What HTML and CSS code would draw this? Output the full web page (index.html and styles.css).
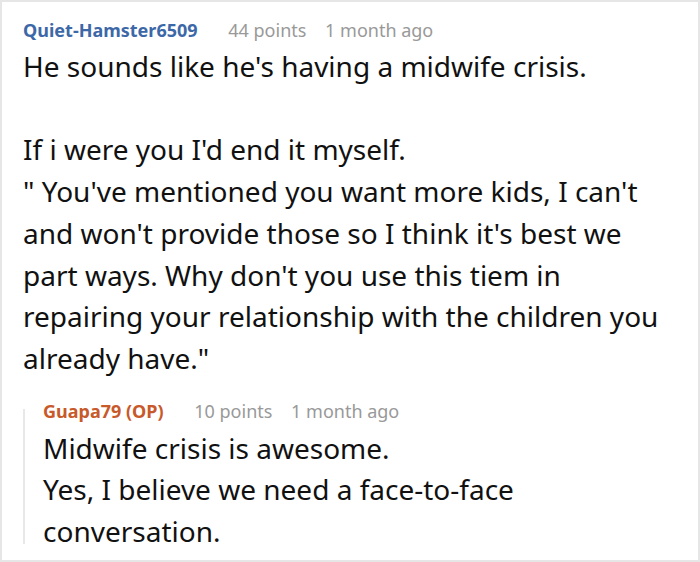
FILE: index.html
```html
<!DOCTYPE html>
<html lang="en">
<head>
    <meta charset="UTF-8">
    <title>Comment</title>
    <link rel="stylesheet" href="styles.css">
</head>
<body>
    <div class="comment-box">
        <div class="comment">
            <div class="comment-meta">
                <span class="author">Quiet-Hamster6509</span>
                <span class="points">44 points</span>
                <span class="time">1 month ago</span>
            </div>
            <div class="comment-text">
                He sounds like he's having a midwife crisis.<br><br>
                If i were you I'd end it myself.<br>
                " You've mentioned you want more kids, I can't and won't provide those so I think it's best we part ways. Why don't you use this tiem in repairing your relationship with the children you already have."
            </div>
        </div>

        <div class="reply">
            <div class="comment-meta">
                <span class="author op">Guapa79 (OP)</span>
                <span class="points">10 points</span>
                <span class="time">1 month ago</span>
            </div>
            <div class="comment-text">
                Midwife crisis is awesome.<br>
                Yes, I believe we need a face-to-face conversation.
            </div>
        </div>
    </div>
</body>
</html>
```

FILE: styles.css
```css
body {
    margin: 0;
    padding: 0;
    font-family: "Noto Sans", "Open Sans", sans-serif;
    background-color: #fff;
}

.comment-box {
    width: 700px;
    height: 562px;
    box-sizing: border-box;
    border: 2px solid #e6e6e6;
    padding: 16px 20px 0 21px;
    overflow: hidden;
}

.comment-meta {
    font-size: 18px;
    line-height: 24px;
    color: #999;
}

.comment-meta .author {
    font-weight: bold;
    color: #3d68a8;
    margin-right: 26px;
}

.comment-meta .points {
    margin-right: 14px;
}

.comment-meta .author.op {
    color: #c8592b;
}

.comment-text {
    font-size: 28px;
    line-height: 41.7px;
    color: #111;
    margin-top: 4px;
}

/* Reply thread */
.reply {
    position: relative;
    margin-top: 19px;
    padding-left: 20px;
}

.reply .comment-text {
    margin-top: 5px;
}

.reply::before {
    content: "";
    position: absolute;
    left: 0;
    top: 10px;
    bottom: 9px;
    width: 2px;
    background-color: #e8e8e8;
}
```
